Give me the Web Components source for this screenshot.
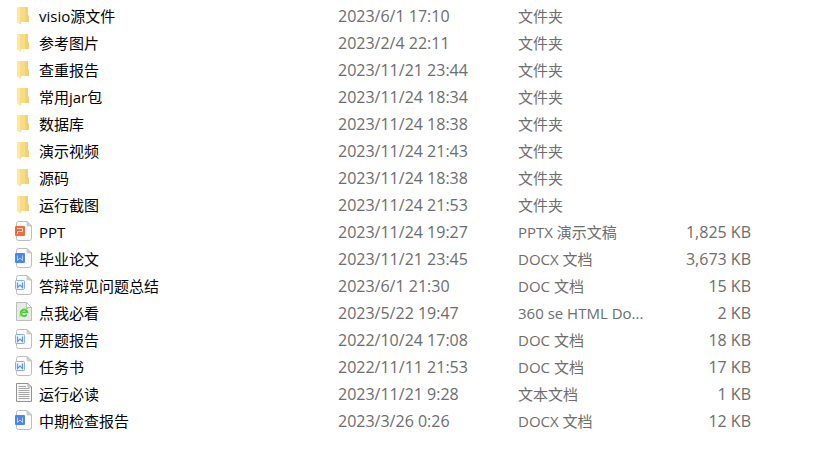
<!DOCTYPE html>
<html lang="zh-CN">
<head>
<meta charset="utf-8">
<meta name="viewport" content="width=device-width, initial-scale=1">
<title>文件列表</title>
<style>
  body {
    margin: 0;
    background: #fff;
    color: #000;
    font-family: "Open Sans", "Noto Sans CJK SC", sans-serif;
    font-size: 15px;
  }
</style>
</head>
<body>
<file-list></file-list>

<script>
// outline shared by every office document
const PAGE = `
  <path d="M6.5 2.5H15L19.5 7V19Q19.5 21.5 17.5 21.5H6.5Q4.5 21.5 4.5 19.5V4.5Q4.5 2.5 6.5 2.5Z" fill="#fdfdfd" stroke="#bdbdbd"/>
  <path d="M15 2.5V6Q15 7 16 7H19.5Z" fill="#d2d2d2" stroke="#bdbdbd" stroke-width=".7"/>`;

const ICONS = {
  folder: `
    <path d="M7 4H16V12L17 13V19H7Z" fill="#f9dc84"/>
    <path d="M13 4H16V12L17 13V19H13Z" fill="#f5d06f"/>
    <path d="M5 4H6L9 6V21L8 21.5L5 19.5Z" fill="#ffe8a3"/>
    <path d="M8.7 6V21" stroke="#efcf78" stroke-width=".6"/>`,
  ppt: PAGE + `
    <rect x="3" y="7" width="10" height="10" rx="1" fill="#f5693a"/>
    <path d="M5 9.5H10.5V12.5H5.5V15" fill="none" stroke="#ffd9ca" stroke-width="1"/>`,
  docx: PAGE + `
    <rect x="3" y="7" width="10" height="10" rx="1" fill="#4a86f0"/>
    <path d="M5.5 9.5V14.5L8 12L10.5 14.5V9.5" fill="none" stroke="#c3d8ff" stroke-width=".9"/>`,
  doc: PAGE + `
    <rect x="3.5" y="7.5" width="9" height="9" rx="1" fill="#f1f6ff" stroke="#82aef8"/>
    <path d="M5.5 9.5V14.5L8 12L10.5 14.5V9.5" fill="none" stroke="#5a92f4" stroke-width="1.2"/>`,
  html: `
    <path d="M4.5 2.5H14.5L19.5 7.5V20.5H4.5Z" fill="#e9e9e9" stroke="#bcbcbc"/>
    <path d="M14.5 2.5V7.5H19.5Z" fill="#fff" stroke="#b0b0b0" stroke-width=".7"/>
    <path d="M14.8 14.6A3.3 3.3 0 1 1 15.3 12.4H9" fill="none" stroke="#43cf30" stroke-width="1.9"/>
    <path d="M8 17Q6.8 15 10.5 11.5T16.5 8" fill="none" stroke="#7bdc52" stroke-width=".9"/>`,
  txt: `
    <path d="M4.5 2.5H16L19.5 6V20.5H4.5Z" fill="#f7f7f7" stroke="#929292"/>
    <path d="M16 2.5V6H19.5" fill="none" stroke="#929292" stroke-width=".8"/>
    <path d="M6.5 5.5H14M6.5 7.5H17.5M6.5 9.5H17.5M6.5 11.5H17.5M6.5 13.5H17.5M6.5 15.5H17.5M6.5 17.5H17.5" stroke="#a6a6a6"/>`
};

const FILES = [
  ['folder', 'visio源文件', '2023/6/1 17:10', '文件夹', ''],
  ['folder', '参考图片', '2023/2/4 22:11', '文件夹', ''],
  ['folder', '查重报告', '2023/11/21 23:44', '文件夹', ''],
  ['folder', '常用jar包', '2023/11/24 18:34', '文件夹', ''],
  ['folder', '数据库', '2023/11/24 18:38', '文件夹', ''],
  ['folder', '演示视频', '2023/11/24 21:43', '文件夹', ''],
  ['folder', '源码', '2023/11/24 18:38', '文件夹', ''],
  ['folder', '运行截图', '2023/11/24 21:53', '文件夹', ''],
  ['ppt', 'PPT', '2023/11/24 19:27', 'PPTX 演示文稿', '1,825 KB'],
  ['docx', '毕业论文', '2023/11/21 23:45', 'DOCX 文档', '3,673 KB'],
  ['doc', '答辩常见问题总结', '2023/6/1 21:30', 'DOC 文档', '15 KB'],
  ['html', '点我必看', '2023/5/22 19:47', '360 se HTML Do...', '2 KB'],
  ['doc', '开题报告', '2022/10/24 17:08', 'DOC 文档', '18 KB'],
  ['doc', '任务书', '2022/11/11 21:53', 'DOC 文档', '17 KB'],
  ['txt', '运行必读', '2023/11/21 9:28', '文本文档', '1 KB'],
  ['docx', '中期检查报告', '2023/3/26 0:26', 'DOCX 文档', '12 KB']
];

class FileIcon extends HTMLElement {
  constructor() {
    super();
    this.attachShadow({ mode: 'open' });
  }

  connectedCallback() {
    this.shadowRoot.innerHTML = `
      <style>
        :host { display: block; flex: none; width: 24px; height: 24px; }
        svg { display: block; }
      </style>
      <svg width="24" height="24" viewBox="0 0 24 24" aria-hidden="true">${ICONS[this.getAttribute('kind')]}</svg>
    `;
  }
}
customElements.define('file-icon', FileIcon);

// icon and name of one file, the name is slotted in
class FileName extends HTMLElement {
  constructor() {
    super();
    this.attachShadow({ mode: 'open' });
  }

  connectedCallback() {
    this.shadowRoot.innerHTML = `
      <style>
        :host { display: flex; gap: 3px; padding-left: 12px; color: #000; }
      </style>
      <file-icon kind="${this.getAttribute('kind')}"></file-icon>
      <span><slot></slot></span>
    `;
  }
}
customElements.define('file-name', FileName);

class FileList extends HTMLElement {
  constructor() {
    super();
    this.attachShadow({ mode: 'open' });
  }

  connectedCallback() {
    const rows = FILES.map(([kind, name, date, type, size]) => `
      <tr>
        <td><file-name kind="${kind}">${name}</file-name></td>
        <td class="date">${date}</td>
        <td>${type}</td>
        <td class="size">${size}</td>
      </tr>`).join('');

    this.shadowRoot.innerHTML = `
      <style>
        :host { display: block; padding: 3px 76px 12px 0; }
        table {
          width: 100%;
          table-layout: fixed;
          border-collapse: collapse;
          color: #6d6d6d;
        }
        td {
          height: 27px;
          padding: 0;
          line-height: 27px;
          white-space: nowrap;
          vertical-align: top;
        }
        .date, .size { font-size: 16px; }
        .size { text-align: right; }
        .col-date { width: 180px; }
        .col-type { width: 140px; }
        .col-size { width: 93px; }
      </style>
      <table aria-label="文件列表">
        <colgroup>
          <col>
          <col class="col-date">
          <col class="col-type">
          <col class="col-size">
        </colgroup>
        <tbody>${rows}</tbody>
      </table>
    `;
  }
}
customElements.define('file-list', FileList);
</script>
</body>
</html>
